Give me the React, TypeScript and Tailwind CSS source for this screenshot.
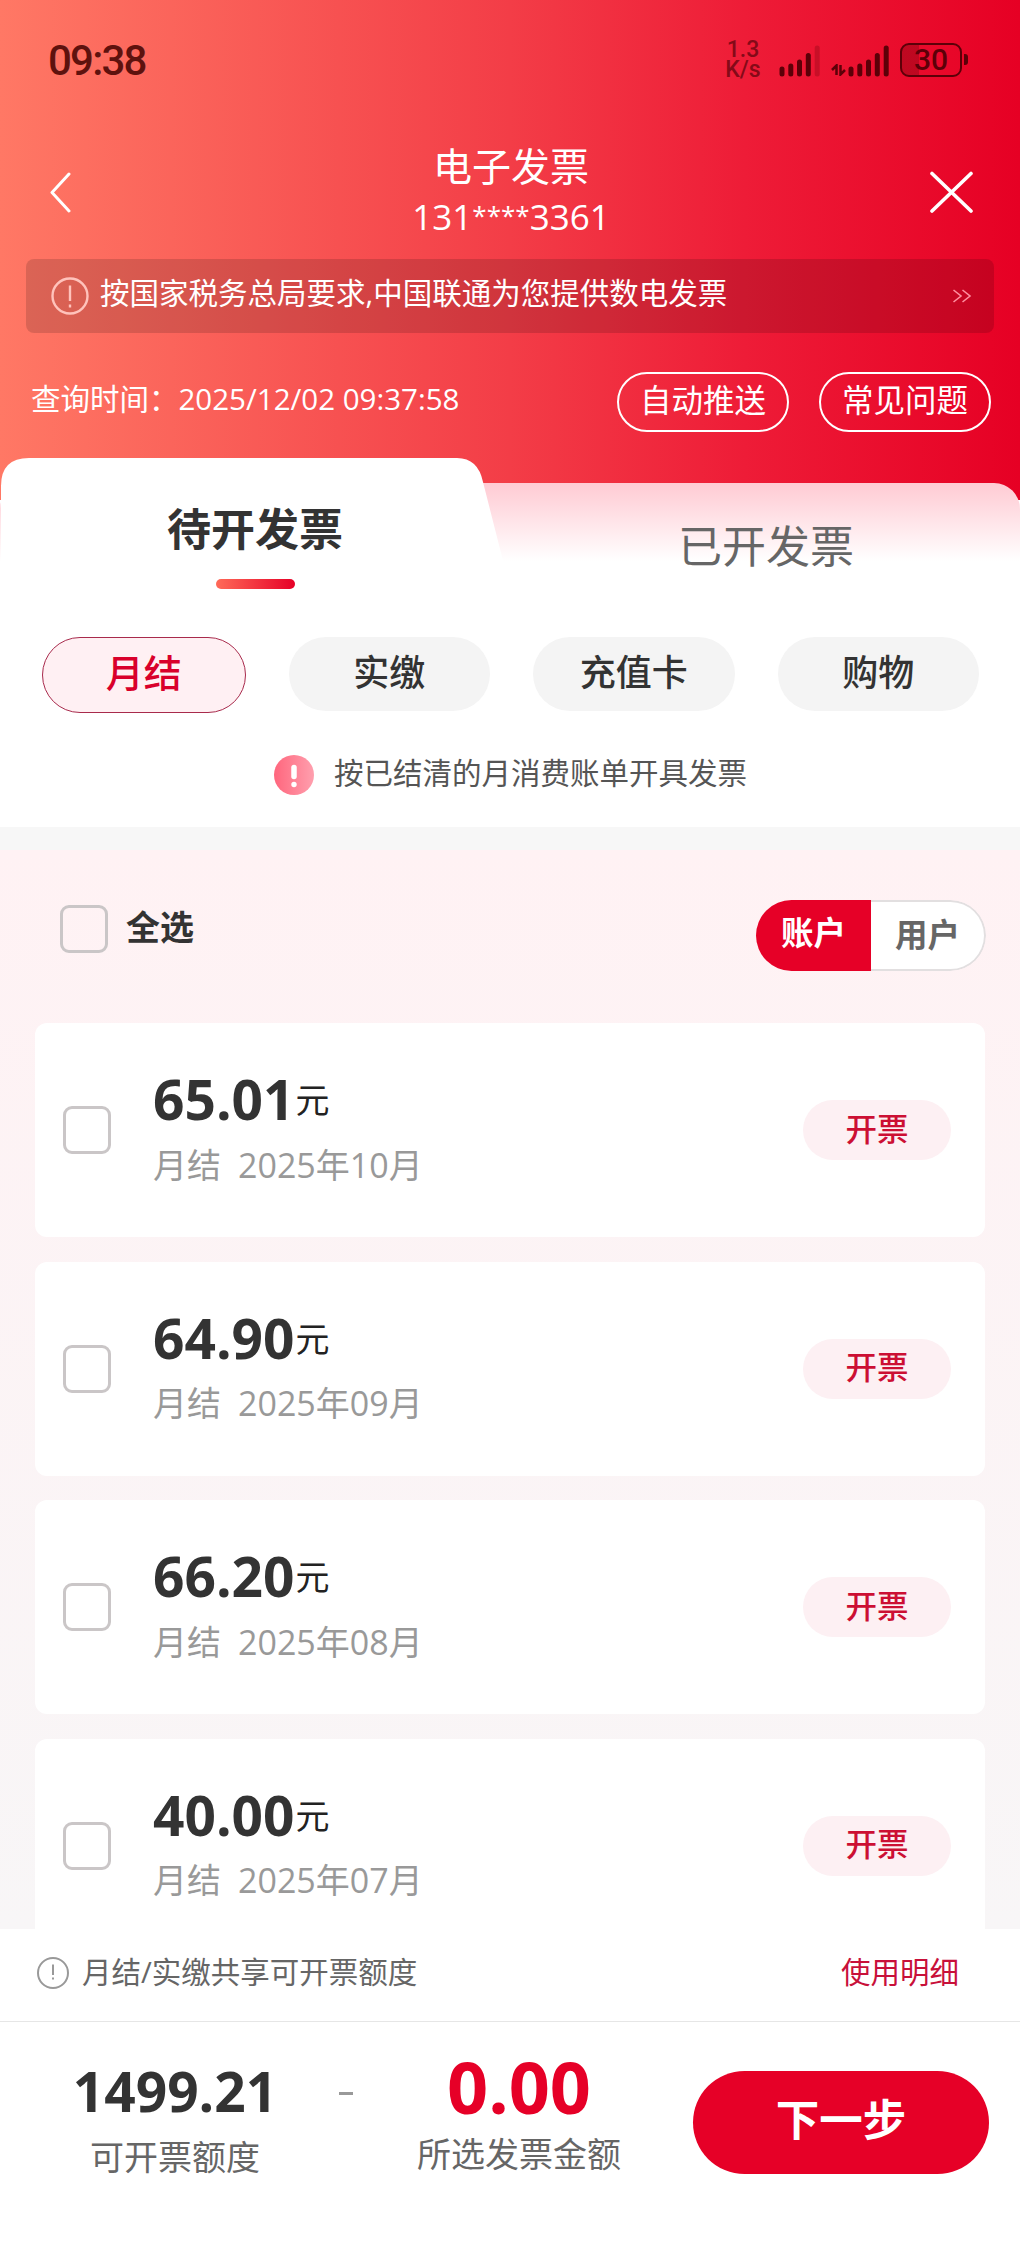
import React, { useState } from 'react';

interface Bill {
  id: string;
  amount: string;
  month: string;
}

const BILLS: Bill[] = [
  { id: '202510', amount: '65.01', month: '2025年10月' },
  { id: '202509', amount: '64.90', month: '2025年09月' },
  { id: '202508', amount: '66.20', month: '2025年08月' },
  { id: '202507', amount: '40.00', month: '2025年07月' },
];

const CATEGORIES = ['月结', '实缴', '充值卡', '购物'];

const SignalBars: React.FC<{ weak?: boolean }> = ({ weak }) => (
  <svg width="42" height="34" viewBox="0 0 42 34" stroke="currentColor" strokeWidth="5" strokeLinecap="round">
    <line x1="3" y1="26" x2="3" y2="31" />
    <line x1="11.8" y1="23" x2="11.8" y2="31" />
    <line x1="20.5" y1="19" x2="20.5" y2="31" />
    <line x1="29.3" y1="12.5" x2="29.3" y2="31" />
    <line x1="38.2" y1="5" x2="38.2" y2="31" strokeOpacity={weak ? 0.25 : 1} />
  </svg>
);

const StatusBar: React.FC = () => (
  <div className="h-[125px] pl-12 pr-[52px] pb-[6px] flex items-center justify-between font-['Roboto',sans-serif] text-[#5c0008]">
    <span className="pt-[2px] text-[42px] leading-none font-medium tracking-[-1.8px] text-[#5e120e]">09:38</span>
    <div className="flex items-center">
      <p className="w-[36px] mr-[18px] text-center text-[23px] leading-[20px] font-medium text-[#850a18]">
        1.3<br />K/s
      </p>
      <SignalBars weak />
      <svg className="ml-[10px] mt-[20px]" width="15" height="12" viewBox="0 0 15 12" fill="none" stroke="currentColor" strokeWidth="2.5">
        <path d="M5.5 11V1.5L1 6" />
        <path d="M9.5 1v9.5L14 6" />
      </svg>
      <div className="ml-[2px]">
        <SignalBars />
      </div>
      <div className="ml-[10px] w-[62px] h-[34px] rounded-[9px] border-[2.5px] border-current overflow-hidden flex items-center justify-center bg-[linear-gradient(90deg,rgba(92,0,8,0.3)_30%,transparent_30%)]">
        <span className="text-[30px] leading-none font-medium">30</span>
      </div>
      <div className="ml-[2px] w-[4px] h-[11px] rounded-r-[3px] bg-current" />
    </div>
  </div>
);

const Header: React.FC = () => (
  <header className="h-[500px] bg-[linear-gradient(90deg,#ff7865_0%,#f33d47_50%,#ee1c37_73%,#e60024_100%)] text-white">
    <StatusBar />

    <div className="h-[134px] pl-12 pr-[46px] flex items-center justify-between">
      <svg width="46" height="42" viewBox="0 0 46 42" fill="none" stroke="currentColor" strokeWidth="3" strokeLinecap="round" strokeLinejoin="round">
        <path d="M21 3L4 21.500L21 40" />
      </svg>
      <div className="pb-[3px] text-center leading-[51px]">
        <h1 className="text-[39px]">电子发票</h1>
        <p className="text-[35px]">
          131<span className="text-[26px] leading-none align-[5px]">****</span>3361
        </p>
      </div>
      <svg width="46" height="42" viewBox="0 0 46 42" fill="none" stroke="currentColor" strokeWidth="3.6" strokeLinecap="round">
        <path d="M4 2.500L43 40M43 2.500L4 40" />
      </svg>
    </div>

    <div className="h-[74px] mx-[26px] pl-[25px] pr-[22px] rounded-lg bg-black/[0.14] flex items-center">
      <svg width="38" height="38" viewBox="0 0 38 38" fill="none" stroke="#ffc2bb" strokeWidth="2.4">
        <circle cx="19" cy="19" r="17.5" />
        <path d="M19 8.5V24M19 27.5V30.5" />
      </svg>
      <p className="ml-[11px] pb-[7px] flex-1 text-[29.5px] leading-none">按国家税务总局要求,中国联通为您提供数电发票</p>
      <svg width="20" height="14" viewBox="0 0 20 14" fill="none" stroke="#ff8fa0" strokeWidth="1.6">
        <path d="M1.5 1L9 7L1.5 13M10.5 1L18 7L10.5 13" />
      </svg>
    </div>

    <div className="mt-[39px] h-[60px] pl-[31px] pr-[29px] flex items-center">
      <p className="flex-1 pb-[6px] text-[29.5px] leading-none">查询时间：2025/12/02 09:37:58</p>
      <button className="w-[172px] h-[60px] pb-[4px] rounded-full border-2 border-white text-[31.5px] leading-none">自动推送</button>
      <button className="ml-[30px] w-[172px] h-[60px] pb-[4px] rounded-full border-2 border-white text-[31.5px] leading-none">常见问题</button>
    </div>
  </header>
);

const InvoiceTabs: React.FC = () => (
  <div className="relative -mt-[42px] h-[142px] pt-[25px]">
    <div className="h-[117px] rounded-t-[26px] bg-[linear-gradient(180deg,#ffcbd4_0px,#ffd5dc_16px,#ffffff_78px)]" />
    {/* slanted white sheet of the active tab */}
    <svg className="absolute left-0 top-0" width="520" height="142" viewBox="0 0 520 142" fill="#fff">
      <path d="M1 142V28Q1 0 29 0H457Q478 0 483 24L513 142Z" />
    </svg>
    <div className="absolute inset-0 grid grid-cols-2 text-center text-[44px] leading-[60px]">
      <div className="pt-[41px] flex flex-col items-center font-bold text-[#333]">
        待开发票
        <span className="mt-[20px] w-[79px] h-[10px] rounded-full bg-[linear-gradient(90deg,#ff6a58,#e60027)]" />
      </div>
      <div className="pt-[58px] pl-[2px] text-[#666]">已开发票</div>
    </div>
  </div>
);

const CheckBox: React.FC<{ checked: boolean; onChange: () => void }> = ({ checked, onChange }) => (
  <button
    role="checkbox"
    aria-checked={checked}
    onClick={onChange}
    className={`w-12 h-12 shrink-0 rounded-[9px] border-[3px] ${checked ? 'bg-[#e60027] border-[#e60027]' : 'border-[#cac6c7]'}`}
  />
);

const BillCard: React.FC<{ bill: Bill; checked: boolean; onToggle: () => void }> = ({ bill, checked, onToggle }) => (
  <div className="h-[214px] shrink-0 rounded-xl bg-white pl-7 pr-[34px] flex items-center">
    <CheckBox checked={checked} onChange={onToggle} />
    <div className="ml-[42px] flex-1">
      <div className="h-[64px] flex items-center text-[#333]">
        <span className="pb-[3px] text-[55px] leading-none font-bold">{bill.amount}</span>
        <span className="ml-px text-[34px] leading-none text-[#222]">元</span>
      </div>
      <div className="h-[60px] pt-[5px] flex items-center gap-[17px] text-[34px] leading-none text-[#999]">
        <span>月结</span>
        <span>{bill.month}</span>
      </div>
    </div>
    <button className="w-[148px] h-[60px] pb-[3px] rounded-full bg-[#fdf0f3] text-[31.5px] leading-none font-medium text-[#cc0f33]">开票</button>
  </div>
);

const App: React.FC = () => {
  const [category, setCategory] = useState(0);
  const [selected, setSelected] = useState<string[]>([]);

  const toggle = (id: string) => {
    setSelected(prev => (prev.includes(id) ? prev.filter(x => x !== id) : [...prev, id]));
  };

  const allSelected = selected.length === BILLS.length;

  return (
    <div className="w-[1020px] h-[2250px] overflow-hidden flex flex-col bg-white font-['Open_Sans','Noto_Sans_CJK_SC',sans-serif]">
      <Header />
      <InvoiceTabs />

      {/* Categories */}
      <div className="mt-[37px] h-[76px] pl-[42px] pr-[41px] flex items-start gap-[43px]">
        {CATEGORIES.map((name, i) => (
          <button
            key={name}
            onClick={() => setCategory(i)}
            className={`flex-1 rounded-full leading-none font-medium ${i === category
              ? 'h-[76px] pb-[6px] border border-[#a82a4c] bg-[#fff0f3] text-[38px] text-[#d9002b]'
              : 'h-[74px] pb-[3px] bg-[#f4f4f4] text-[36px] text-[#333]'}`}
          >
            {name}
          </button>
        ))}
      </div>

      <div className="mt-[41px] h-[73px] pl-[1px] pb-[31px] flex items-center justify-center gap-[20px]">
        <svg width="40" height="40" viewBox="0 0 40 40">
          <defs>
            <linearGradient id="hint" x1="0" y1="0" x2="1" y2="0">
              <stop offset="0" stopColor="#ff667d" />
              <stop offset="1" stopColor="#ff9fae" />
            </linearGradient>
          </defs>
          <circle cx="20" cy="20" r="20" fill="url(#hint)" />
          <path d="M20 12.500V21.500" stroke="#fff" strokeWidth="5.500" strokeLinecap="round" />
          <circle cx="20" cy="29.500" r="2.700" fill="#fff" />
        </svg>
        <p className="pb-[4px] text-[29.5px] leading-none text-[#555]">按已结清的月消费账单开具发票</p>
      </div>

      {/* Bills */}
      <div className="h-[1102px] shrink-0 border-t-[23px] border-[#f7f7f7] overflow-hidden bg-[linear-gradient(180deg,#fff2f4_0%,#f8f6f7_100%)]">
        <div className="h-[173px] pl-[60px] pr-[34px] pt-[50px] flex items-start">
          <div className="mt-[5px] flex">
            <CheckBox checked={allSelected} onChange={() => setSelected(allSelected ? [] : BILLS.map(b => b.id))} />
            <span className="ml-[18px] text-[34px] leading-[45px] font-bold text-[#333]">全选</span>
          </div>
          <div className="ml-auto flex w-[230px] h-[71px] rounded-full overflow-hidden text-[32.5px] text-center font-bold">
            <div className="w-[115px] bg-[#e60027] leading-[66px] text-white">账户</div>
            <div className="w-[115px] rounded-r-full border-2 border-l-0 border-[#e2dfe0] bg-white leading-[66px] text-[#666]">用户</div>
          </div>
        </div>
        <div className="px-[35px] flex flex-col gap-[24.5px]">
          {BILLS.map(bill => (
            <BillCard key={bill.id} bill={bill} checked={selected.includes(bill.id)} onToggle={() => toggle(bill.id)} />
          ))}
        </div>
      </div>

      {/* Quota info */}
      <div className="h-[93px] shrink-0 border-b border-[#e6e6e6] pl-[37px] pr-[61px] pb-[4px] flex items-center">
        <svg width="32" height="32" viewBox="0 0 32 32" fill="none" stroke="#999" strokeWidth="2">
          <circle cx="16" cy="16" r="15" />
          <path d="M16 7.500V18M16 20.500V22.500" />
        </svg>
        <p className="ml-[13px] pb-[3px] flex-1 text-[29.5px] leading-none text-[#666]">月结/实缴共享可开票额度</p>
        <a className="pb-[3px] text-[29.5px] leading-none text-[#c8103a]">使用明细</a>
      </div>

      {/* Footer */}
      <footer className="pt-[27px] pl-[46px] pr-[31px] flex items-start text-center">
        <div className="mt-[3px] w-[258px]">
          <p className="text-[55px] leading-[78px] font-bold text-[#333]">1499.21</p>
          <p className="mt-[2px] text-[34px] leading-[50px] text-[#666]">可开票额度</p>
        </div>
        <div className="mt-[43px] ml-[35px] w-[14px] h-[3px] bg-[#999]" />
        <div className="ml-[36px] w-[260px]">
          <p className="text-[72px] leading-[74px] font-bold text-[#e60027]">0.00</p>
          <p className="mt-[6px] text-[34px] leading-[50px] text-[#666]">所选发票金额</p>
        </div>
        <button className="mt-[22px] ml-auto w-[296px] h-[103px] pb-[5px] rounded-full bg-[#e60027] text-[43.5px] leading-none font-bold text-white">下一步</button>
      </footer>
    </div>
  );
};

export default App;
